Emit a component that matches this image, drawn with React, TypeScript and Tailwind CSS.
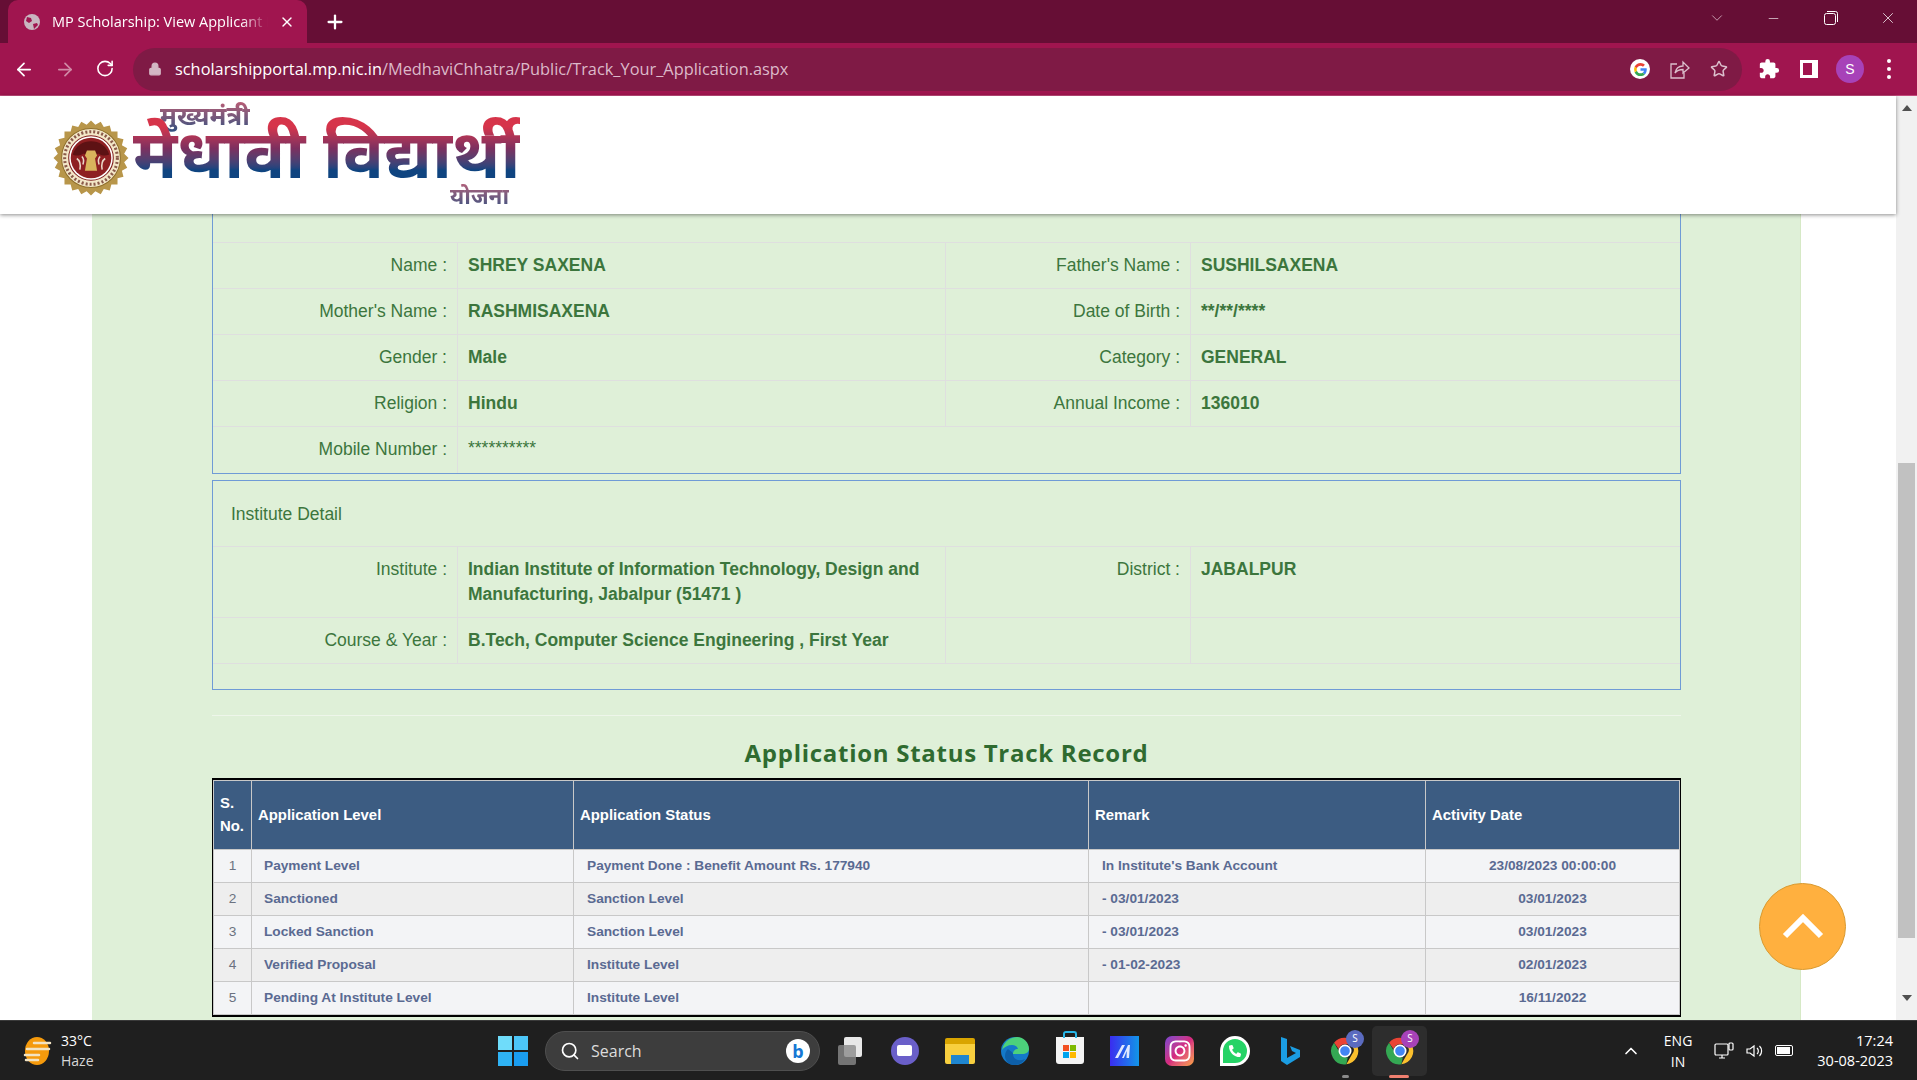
import { ArrowLeft, ArrowRight, ChevronDown, ChevronUp, Lock, Minus, Plus, RotateCw, Search, Star, X } from "lucide-react";
import { FaInstagram, FaPhoneAlt } from "react-icons/fa";
import { MdExtension } from "react-icons/md";

const ARIAL = "font-['Liberation_Sans',Arial,sans-serif]";
const SEGOE = "font-['Open_Sans','Noto_Sans',sans-serif]";

const STUDENT = [
  ["Name :", "SHREY SAXENA", "Father's Name :", "SUSHILSAXENA"],
  ["Mother's Name :", "RASHMISAXENA", "Date of Birth :", "**/**/****"],
  ["Gender :", "Male", "Category :", "GENERAL"],
  ["Religion :", "Hindu", "Annual Income :", "136010"],
];

const TRACK = [
  ["1", "Payment Level", "Payment Done : Benefit Amount Rs. 177940", "In Institute's Bank Account", "23/08/2023 00:00:00"],
  ["2", "Sanctioned", "Sanction Level", "- 03/01/2023", "03/01/2023"],
  ["3", "Locked Sanction", "Sanction Level", "- 03/01/2023", "03/01/2023"],
  ["4", "Verified Proposal", "Institute Level", "- 01-02-2023", "02/01/2023"],
  ["5", "Pending At Institute Level", "Institute Level", "", "16/11/2022"],
];

function Label({ children }: { children?: string }) {
  return <div className="w-[245px] shrink-0 border-r border-[#dfdfdf] py-[10px] pr-[10px] text-right">{children}</div>;
}

function Value({ children, wide }: { children?: string; wide?: boolean }) {
  return <div className={`py-[10px] pl-[10px] pr-[10px] font-bold ${wide ? "flex-1" : "w-[488px] shrink-0 border-r border-[#dfdfdf]"}`}>{children}</div>;
}

function ChromeLogo({ size = 32 }: { size?: number }) {
  return (
    <svg width={size} height={size} viewBox="0 0 48 48">
      <path d="M24 4a20 20 0 0 1 17.300 10H24a10 10 0 0 0-9.500 7L7.600 11.600A20 20 0 0 1 24 4z" fill="#ea4335" />
      <path d="M41.300 14A20 20 0 0 1 26 43.900l8.400-14.600A10 10 0 0 0 33 14z" fill="#fbc02d" />
      <path d="M26 43.900A20 20 0 0 1 7.600 11.600l8.600 14.900a10 10 0 0 0 12 7z" fill="#34a853" />
      <circle cx="24" cy="24" r="8.500" fill="#4285f4" stroke="#fff" strokeWidth="2.500" />
    </svg>
  );
}

function Emblem() {
  const pts = Array.from({ length: 48 }, (_, i) => {
    const r = i % 2 ? 33 : 37;
    const a = (i * Math.PI) / 24;
    return `${37 + r * Math.cos(a)},${37.5 + r * Math.sin(a)}`;
  }).join(" ");
  return (
    <svg width="76" height="76" viewBox="0 0 74 75">
      <polygon points={pts} fill="#b8964a" />
      <circle cx="37" cy="37.500" r="29" fill="#f3e7c8" stroke="#8f6f2c" strokeWidth="1" />
      <circle cx="37" cy="37.500" r="26" fill="none" stroke="#8a5a4a" strokeWidth="3" strokeDasharray="2 2" />
      <circle cx="37" cy="37.500" r="22" fill="#fff" stroke="#7e1d1d" strokeWidth="1" />
      <circle cx="37" cy="37.500" r="20" fill="#8e1f22" />
      <path d="M19 34c3-9 10-13 18-13s15 4 18 13c-4 2-8 1-11-1-2 3-12 3-14 0-3 2-8 3-11 1z" fill="#5d1214" />
      <path d="M33 30h8l2 5-2 3 2 12H31l2-12-2-3z" fill="#d9b45c" />
      <path d="M23 38c3 2 4 6 3 11M51 38c-3 2-4 6-3 11M28 36c2 2 2 5 1 8M46 36c-2 2-2 5-1 8" stroke="#e9d7c8" strokeWidth="1.500" fill="none" />
    </svg>
  );
}

function Logo() {
  return (
    <div className="relative ml-[53px] h-[118px] w-[480px] font-['Noto_Sans','DejaVu_Sans',sans-serif]">
      <div className="absolute left-0 top-[24px]"><Emblem /></div>
      <div className="absolute left-[107px] top-[2px] bg-gradient-to-b from-[#c85a72] to-[#2d4f80] bg-clip-text text-[26px] font-bold leading-[34px] text-transparent">मुख्यमंत्री</div>
      <div className="absolute left-[80px] top-[20px] whitespace-nowrap bg-gradient-to-b from-[#d6344a] from-15% via-[#7d2f5f] via-45% to-[#0f4480] to-75% bg-clip-text text-[68px] font-bold leading-[72px] text-transparent">मेधावी विद्यार्थी</div>
      <div className="absolute left-[397px] top-[86px] bg-gradient-to-b from-[#b8607a] to-[#2d4f80] bg-clip-text text-[22.500px] font-bold leading-[28px] text-transparent">योजना</div>
    </div>
  );
}

function TaskIcon({ children, active }: { children: React.ReactNode; active?: boolean }) {
  return (
    <div className={`relative flex h-[50px] w-[55px] items-center justify-center ${active ? "rounded-[5px] bg-[#2d2d2d]" : ""}`}>
      {children}
    </div>
  );
}

export default function App() {
  return (
    <div className={`flex h-screen w-full flex-col overflow-hidden bg-white ${ARIAL}`}>
      {/* tab strip */}
      <div className={`flex h-[43px] shrink-0 items-end bg-[#660e35] pl-[8px] text-white ${SEGOE}`}>
        <div className="flex h-[43px] w-[299px] items-center rounded-t-[10px] bg-[#a0154f] pl-[16px] pr-[12px]">
          <svg width="16" height="16" viewBox="0 0 16 16" className="shrink-0">
            <circle cx="8" cy="8" r="8" fill="#c9b5c0" />
            <path d="M3 3l4 1 1 3-3 2-3-2zM9 10l4-1 1 2-4 4z" fill="#a0154f" />
          </svg>
          <div className="ml-[12px] w-[225px] overflow-hidden whitespace-nowrap text-[14.500px] leading-[20px] [mask-image:linear-gradient(to_right,black_84%,transparent_96%)]">MP Scholarship: View Applicant Details</div>
          <X size={16} className="ml-[2px] shrink-0" />
        </div>
        <div className="flex h-[43px] w-[56px] items-center justify-center"><Plus size={22} strokeWidth={2.500} /></div>
        <div className="flex-1" />
        <div className="flex h-[36px] w-[56px] items-center justify-center self-start"><ChevronDown size={18} strokeWidth={1} className="text-[#e4c7d3]" /></div>
        <div className="flex h-[36px] w-[57px] items-center justify-center self-start"><Minus size={15} strokeWidth={1} /></div>
        <div className="flex h-[36px] w-[57px] items-center justify-center self-start">
          <svg width="14" height="14" viewBox="0 0 14 14" fill="none" stroke="#fff"><rect x="0.500" y="2.500" width="11" height="11" rx="2" /><path d="M3 .5h8.500a2 2 0 0 1 2 2V11" /></svg>
        </div>
        <div className="flex h-[36px] w-[58px] items-center justify-center self-start"><X size={18} strokeWidth={1} /></div>
      </div>

      {/* toolbar */}
      <div className="flex h-[53px] shrink-0 items-center border-b border-[#c24a7b] bg-[#a0154f] text-white">
        <div className="flex w-[133px] shrink-0 pl-[12px]">
          <ArrowLeft size={21} className="w-[24px]" strokeWidth={2} />
          <ArrowRight size={21} className="ml-[17px] w-[24px] text-[#d08aa6]" strokeWidth={2} />
          <RotateCw size={19} className="ml-[16px] w-[24px]" strokeWidth={2} />
        </div>
        <div className={`flex h-[43px] w-[1609px] shrink-0 items-center rounded-full bg-[#7f1a45] pl-[15px] pr-[14px] ${SEGOE}`}>
          <Lock size={14} fill="#d3b7c4" className="text-[#d3b7c4]" />
          <div className="ml-[13px] flex-1 whitespace-nowrap text-[16.350px] leading-[24px]">
            scholarshipportal.mp.nic.in<span className="text-[#dcb9c9]">/MedhaviChhatra/Public/Track_Your_Application.aspx</span>
          </div>
          <div className="mr-[20px] flex h-[20px] w-[20px] items-center justify-center rounded-full bg-white">
            <svg width="15" height="15" viewBox="0 0 48 48">
              <path d="M44 24c0-1.500-.1-2.800-.4-4H24v8h11.300c-.5 2.600-2 4.800-4.300 6.300l6.900 5.300C42 35.800 44 30.400 44 24z" fill="#4285f4" />
              <path d="M24 45c5.700 0 10.500-1.900 13.900-5.100L31 34.300c-1.900 1.300-4.300 2-7 2-5.400 0-10-3.600-11.600-8.500l-7.100 5.500C8.800 40.300 15.800 45 24 45z" fill="#34a853" />
              <path d="M12.400 27.800a12.600 12.600 0 0 1 0-7.600l-7.100-5.500a21 21 0 0 0 0 18.600z" fill="#fbbc05" />
              <path d="M24 11.700c3.100 0 5.800 1 8 3.100l6-6C34.400 5.400 29.700 3 24 3 15.800 3 8.800 7.700 5.300 14.700l7.100 5.500C14 15.300 18.600 11.700 24 11.700z" fill="#ea4335" />
            </svg>
          </div>
          <svg width="20" height="19" viewBox="0 0 20 19" fill="none" stroke="#dcc0cd" strokeWidth="1.300" className="mr-[20px]">
            <path d="M7 4H1v14h13v-5" />
            <path d="M5 13c1-5 4-7 8-7V2l6 6-6 5V9.500c-3 0-6 1-8 3.500z" />
          </svg>
          <Star size={18} strokeWidth={2} className="text-[#dcc0cd]" />
        </div>
        <MdExtension size={22} className="ml-[16px]" />
        <div className="ml-[20px] h-[18px] w-[18px] border-[3px] border-r-[6px] border-white bg-[#a0154f]" />
        <div className="ml-[18px] flex h-[28px] w-[28px] items-center justify-center rounded-full bg-[#a742b8] text-[14px]">S</div>
        <div className="ml-[23px] flex flex-col gap-[4px]">
          <div className="h-[4px] w-[4px] rounded-full bg-white" />
          <div className="h-[4px] w-[4px] rounded-full bg-white" />
          <div className="h-[4px] w-[4px] rounded-full bg-white" />
        </div>
      </div>

      {/* page */}
      <div className="flex min-h-0 flex-1">
        <div className="relative flex min-w-0 flex-1 flex-col">
          <div className="relative z-10 h-[118px] shrink-0 bg-white shadow-[0_1px_4px_rgba(0,0,0,0.45)]">
            <Logo />
          </div>

          <div className="ml-[92px] mr-[95px] min-h-0 flex-1 overflow-hidden border-r border-[#d6e9c6] bg-[#dff0d8] pl-[120px] pr-[119px] text-[17.500px] leading-[25px] text-[#3c763d]">
            {/* student box, top is scrolled away */}
            <div className="border-x border-b border-[#6f9bd6] pt-[28px]">
              {STUDENT.map((r) => (
                <div key={r[0]} className="flex h-[46px] border-t border-[#dfdfdf]">
                  <Label>{r[0]}</Label>
                  <Value>{r[1]}</Value>
                  <Label>{r[2]}</Label>
                  <Value wide>{r[3]}</Value>
                </div>
              ))}
              <div className="flex h-[47px] border-t border-[#dfdfdf]">
                <Label>Mobile Number :</Label>
                <div className="pl-[10px] pt-[9px]">**********</div>
              </div>
            </div>

            <div className="mt-[6px] border border-[#6f9bd6]">
              <div className="flex h-[65px] items-center pl-[18px] pt-[2px]">Institute Detail</div>
              <div className="flex h-[71px] border-t border-[#dfdfdf]">
                <Label>Institute :</Label>
                <Value>Indian Institute of Information Technology, Design and Manufacturing, Jabalpur (51471 )</Value>
                <Label>District :</Label>
                <Value wide>JABALPUR</Value>
              </div>
              <div className="flex h-[46px] border-t border-[#dfdfdf]">
                <Label>Course &amp; Year :</Label>
                <Value>B.Tech, Computer Science Engineering , First Year</Value>
                <Label />
                <Value wide />
              </div>
              <div className="h-[26px] border-t border-[#dfdfdf]" />
            </div>

            <div className="mt-[25px] border-t border-[#eef6ea]" />

            <h2 className={`mt-[19px] text-center text-[24px] font-bold leading-[36px] tracking-[0.720px] text-[#2f6b30] ${SEGOE}`}>Application Status Track Record</h2>

            <div className="mt-[7px] border-x border-y-2 border-black">
              <table className="w-full table-fixed border-collapse text-[14.900px] font-bold">
                <thead>
                  <tr className="h-[69px] bg-[#3c5c82] text-left leading-[23px] text-white">
                    <th className="w-[38px] border border-[#c8c8c8] pl-[6px]">S. No.</th>
                    <th className="w-[322px] border border-[#c8c8c8] pl-[6px]">Application Level</th>
                    <th className="w-[515px] border border-[#c8c8c8] pl-[6px]">Application Status</th>
                    <th className="w-[337px] border border-[#c8c8c8] pl-[6px]">Remark</th>
                    <th className="border border-[#c8c8c8] pl-[6px]">Activity Date</th>
                  </tr>
                </thead>
                <tbody className="text-[13.700px] text-[#5a6a92]">
                  {TRACK.map((r, i) => (
                    <tr key={r[0]} className={`h-[33px] ${i % 2 ? "bg-[#eeeeee]" : "bg-[#f3f4f6]"}`}>
                      <td className="border border-[#c8c8c8] pb-[2px] text-center font-normal text-[#6b7280]">{r[0]}</td>
                      <td className="border border-[#c8c8c8] pb-[2px] pl-[12px]">{r[1]}</td>
                      <td className="border border-[#c8c8c8] pb-[2px] pl-[13px]">{r[2]}</td>
                      <td className="border border-[#c8c8c8] pb-[2px] pl-[13px]">{r[3]}</td>
                      <td className="border border-[#c8c8c8] pb-[2px] text-center">{r[4]}</td>
                    </tr>
                  ))}
                </tbody>
              </table>
            </div>
          </div>

          <div className="absolute left-[1759px] top-[787px] flex h-[87px] w-[87px] items-center justify-center rounded-full border border-[#d99a30] bg-[#ffb03f] text-white">
            <ChevronUp size={72} strokeWidth={2} strokeLinecap="butt" strokeLinejoin="miter" />
          </div>
        </div>

        {/* scrollbar */}
        <div className="flex w-[21px] shrink-0 flex-col items-center bg-[#f1f1f1]">
          <div className="mt-[9px] h-0 w-0 border-x-[5px] border-b-[6px] border-x-transparent border-b-[#505050]" />
          <div className="mt-[352px] h-[475px] w-[17px] bg-[#c1c1c1]" />
          <div className="mt-[57px] h-0 w-0 border-x-[5px] border-t-[6px] border-x-transparent border-t-[#505050]" />
        </div>
      </div>

      {/* taskbar */}
      <div className={`flex h-[60px] shrink-0 items-center border-t border-[#3a3a3a] bg-[#1f1f1f] text-white ${SEGOE}`}>
        <div className="flex w-[488px] shrink-0 items-center pl-[22px]">
          <svg width="30" height="30" viewBox="0 0 30 30">
            <ellipse cx="15" cy="15" rx="12" ry="14" fill="#f59a0c" />
            <path d="M12 7h16M5 13h12M18 13h9M3 19h14M4 24h12" stroke="#f2e3c3" strokeWidth="2.500" strokeLinecap="round" />
          </svg>
          <div className="ml-[9px] text-[14px] leading-[20px]">
            <div>33°C</div>
            <div className="text-[#d8d8d8]">Haze</div>
          </div>
        </div>
        <div className="flex w-[50px] justify-center">
          <div className="grid grid-cols-2 gap-[2px]">
            <div className="h-[14px] w-[14px] bg-[#6fdcfa]" />
            <div className="h-[14px] w-[14px] bg-[#4cc6f8]" />
            <div className="h-[14px] w-[14px] bg-[#2fb3f5]" />
            <div className="h-[14px] w-[14px] bg-[#1a9df0]" />
          </div>
        </div>
        <div className="ml-[7px] flex h-[40px] w-[275px] items-center rounded-full border border-[#4f4f4f] bg-[#3d3d3d] pl-[14px] pr-[9px]">
          <Search size={20} strokeWidth={2} />
          <div className="ml-[11px] flex-1 text-[16px] text-[#dcdcdc]">Search</div>
          <div className="flex h-[24px] w-[24px] items-center justify-center rounded-full bg-white text-[18px] font-bold leading-none text-[#1677d4]">b</div>
        </div>
        <div className="ml-[2px] flex items-center">
          <TaskIcon>
            <div className="relative h-[28px] w-[30px]">
              <div className="absolute right-[3px] top-0 h-[20px] w-[18px] rounded-[2px] bg-[#e8e8e8]" />
              <div className="absolute bottom-0 left-[3px] h-[20px] w-[18px] rounded-[2px] bg-[#8a8a8a]/80" />
            </div>
          </TaskIcon>
          <TaskIcon>
            <div className="flex h-[28px] w-[28px] items-center justify-center rounded-full bg-[#6a5fc9]">
              <div className="h-[11px] w-[15px] rounded-[2px] bg-white" />
            </div>
          </TaskIcon>
          <TaskIcon>
            <div className="h-[26px] w-[30px] rounded-[2px] border-t-[6px] border-[#d9a400] bg-[#f8cf3f]">
              <div className="mx-auto mt-[11px] h-[9px] w-[18px] bg-[#1f86d0]" />
            </div>
          </TaskIcon>
          <TaskIcon>
            <svg width="30" height="30" viewBox="0 0 30 30">
              <circle cx="15" cy="15" r="14" fill="#1479c9" />
              <path d="M2 14C4 4 12 1 17 1c7 0 12 6 12 12 0 3-3 5-7 5H13c0-3 2-5 5-5-1-3-3-4-6-4-4 0-8 2-10 5z" fill="#4cd17b" />
              <path d="M13 18c0 5 5 8 12 5-2 4-7 6-11 6-6 0-9-5-9-9 0-3 1-5 3-7 2 2 5 3 5 5z" fill="#0e5fa8" />
            </svg>
          </TaskIcon>
          <TaskIcon>
            <div className="relative h-[27px] w-[28px] rounded-b-[3px] bg-[#f4f4f4]">
              <div className="absolute -top-[6px] left-[7px] h-[7px] w-[14px] rounded-t-[3px] border-2 border-b-0 border-[#27b6e8]" />
              <div className="absolute left-[7px] top-[8px] grid grid-cols-2 gap-[1px]">
                <div className="h-[6px] w-[6px] bg-[#f25022]" />
                <div className="h-[6px] w-[6px] bg-[#7fba00]" />
                <div className="h-[6px] w-[6px] bg-[#00a4ef]" />
                <div className="h-[6px] w-[6px] bg-[#ffb900]" />
              </div>
            </div>
          </TaskIcon>
          <TaskIcon>
            <svg width="29" height="30" viewBox="0 0 29 30">
              <defs><linearGradient id="mx" x1="0" x2="1"><stop offset="0" stopColor="#3a2cf0" /><stop offset="1" stopColor="#1296e8" /></linearGradient></defs>
              <rect width="29" height="30" fill="url(#mx)" />
              <path d="M5 22 12 9h3L8 22zM12 22l6-13h2l-1 13h-2.500l.3-7-3 7z" fill="#dfe8ff" />
            </svg>
          </TaskIcon>
          <TaskIcon>
            <div className="flex h-[30px] w-[29px] items-center justify-center rounded-[7px] bg-gradient-to-br from-[#7a3fd0] via-[#d6287f] to-[#f9a13a]">
              <FaInstagram size={24} />
            </div>
          </TaskIcon>
          <TaskIcon>
            <div className="flex h-[30px] w-[30px] items-center justify-center rounded-full rounded-bl-[4px] border-[3px] border-white bg-[#25d366]">
              <FaPhoneAlt size={12} />
            </div>
          </TaskIcon>
          <TaskIcon>
            <svg width="22" height="30" viewBox="0 0 22 30">
              <path d="M2 1l6 2v19l9-5-4-2-2-5 10 4v7L8 29 2 25z" fill="#1b9de2" />
            </svg>
          </TaskIcon>
          <TaskIcon>
            <ChromeLogo />
            <div className="absolute right-[8px] top-[4px] flex h-[18px] w-[18px] items-center justify-center rounded-full bg-[#5b6bc0] text-[10px]">S</div>
            <div className="absolute bottom-[-2px] left-[25px] h-[3px] w-[7px] rounded-full bg-[#8a8a8a]" />
          </TaskIcon>
          <TaskIcon active>
            <ChromeLogo />
            <div className="absolute right-[8px] top-[4px] flex h-[18px] w-[18px] items-center justify-center rounded-full bg-[#a742b8] text-[10px]">S</div>
            <div className="absolute bottom-[-2px] left-[17px] h-[3px] w-[20px] rounded-full bg-[#f08070]" />
          </TaskIcon>
        </div>
        <div className="flex-1" />
        <ChevronUp size={20} strokeWidth={2} className="mr-[23px]" />
        <div className="mr-[22px] text-center text-[14px] leading-[21px]">
          <div>ENG</div>
          <div>IN</div>
        </div>
        <svg width="20" height="20" viewBox="0 0 20 20" fill="none" stroke="#fff" strokeWidth="1.200" className="mr-[11px]">
          <rect x="1" y="3" width="13" height="11" rx="1" />
          <path d="M5 17h6M8 14v3" />
          <rect x="15" y="2" width="4" height="7" rx="1" />
        </svg>
        <svg width="20" height="20" viewBox="0 0 20 20" fill="none" stroke="#fff" strokeWidth="1.200" className="mr-[10px]">
          <path d="M2 8v4h3l4 3V5L5 8z" />
          <path d="M12 7a4 4 0 0 1 0 6M14.500 5a7 7 0 0 1 0 10" />
        </svg>
        <div className="relative mr-[24px] h-[11px] w-[18px] rounded-[2px] border border-white p-[1px]">
          <div className="h-full w-[13px] bg-white" />
        </div>
        <div className="mr-[24px] text-right text-[14.500px] leading-[20px]">
          <div>17:24</div>
          <div>30-08-2023</div>
        </div>
      </div>
    </div>
  );
}
